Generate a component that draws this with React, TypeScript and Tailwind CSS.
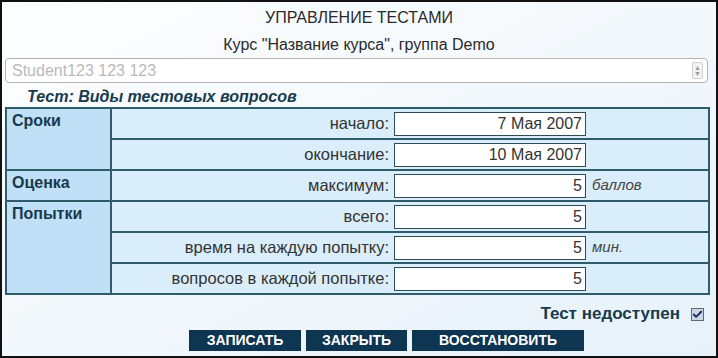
import { Check } from "lucide-react";

type Row = {
  label: string;
  value: string;
  unit?: string;
};

type Group = {
  title: string;
  rows: Row[];
};

const groups: Group[] = [
  {
    title: "Сроки",
    rows: [
      { label: "начало:", value: "7 Мая 2007" },
      { label: "окончание:", value: "10 Мая 2007" },
    ],
  },
  {
    title: "Оценка",
    rows: [{ label: "максимум:", value: "5", unit: "баллов" }],
  },
  {
    title: "Попытки",
    rows: [
      { label: "всего:", value: "5" },
      { label: "время на каждую попытку:", value: "5", unit: "мин." },
      { label: "вопросов в каждой попытке:", value: "5" },
    ],
  },
];

const buttons = [
  { text: "ЗАПИСАТЬ", w: "w-[112px]" },
  { text: "ЗАКРЫТЬ", w: "w-[101px]" },
  { text: "ВОССТАНОВИТЬ", w: "w-[172px]" },
];

export default function App() {
  return (
    <div className="h-[358px] w-[718px] overflow-hidden border-2 border-[#111] bg-gradient-to-br from-[#fdfeff] via-[#f3f8fc] to-[#e6f1fa] font-['Liberation_Sans',Arial,sans-serif] text-[#333]">
      <div className="flex flex-col px-[3px]">
        <div className="pt-[6px] text-center text-[16px] leading-[20px] text-[#2a2a2a]">УПРАВЛЕНИЕ ТЕСТАМИ</div>
        <div className="mt-[7px] text-center text-[16px] leading-[20px] text-[#2a2a2a]">
          Курс "Название курса", группа Demo
        </div>

        <div className="mt-[3px] flex h-[25px] w-[703px] items-center justify-between rounded-[4px] border border-[#b5b5b5] bg-white pl-[6px] pr-[4px]">
          <span className="text-[16px] text-[#b9b9b9]">Student123 123 123</span>
          <span className="flex h-[17px] w-[11px] flex-col items-center justify-center rounded-[2px] border border-[#d0d0d0] bg-[#f3f3f3] text-[7px] leading-[6px] text-[#999]">
            <span>▲</span>
            <span>▼</span>
          </span>
        </div>

        <div className="mt-[4px] pl-[22px] text-[16px] font-bold italic leading-[20px] text-[#173a4c]">
          Тест: Виды тестовых вопросов
        </div>

        <table className="w-[705px] border-collapse border-2 border-[#2f5c6a]">
          <tbody>
            {groups.map((g) =>
              g.rows.map((r, i) => (
                <tr key={g.title + r.label} className="h-[31px]">
                  {i === 0 ? (
                    <td
                      rowSpan={g.rows.length}
                      className="w-[105px] border-2 border-[#2f5c6a] bg-[#bfe0f7] px-[5px] pt-[3px] align-top text-[16px] font-bold leading-[18px] text-[#173a4c]"
                    >
                      {g.title}
                    </td>
                  ) : null}
                  <td className="border-2 border-[#2f5c6a] bg-[#d9edfa] p-0">
                    <div className="flex items-center">
                      <span className="w-[282px] pr-[5px] text-right text-[16.5px] text-[#333]">{r.label}</span>
                      <div className="flex h-[24px] w-[192px] items-center justify-end border border-[#2d4c57] bg-white pr-[3px] text-[16px] text-[#333]">
                        {r.value}
                      </div>
                      {r.unit ? (
                        <span className="pl-[6px] text-[15px] italic text-[#444]">{r.unit}</span>
                      ) : null}
                    </div>
                  </td>
                </tr>
              ))
            )}
          </tbody>
        </table>

        <div className="mt-[9px] flex items-center justify-end pr-[9px]">
          <span className="text-[17px] font-bold leading-[20px] text-[#173a4c]">Тест недоступен</span>
          <span className="ml-[11px] flex h-[13px] w-[13px] items-center justify-center border border-[#666] bg-[#cdd4e4]">
            <Check className="h-[11px] w-[11px] text-[#0f2a66]" strokeWidth={4} />
          </span>
        </div>

        <div className="mt-[6px] flex gap-[5px] pl-[184px]">
          {buttons.map((b) => (
            <button
              key={b.text}
              className={`h-[21px] bg-[#0e3552] text-[14px] font-bold leading-[21px] text-white ${b.w}`}
            >
              {b.text}
            </button>
          ))}
        </div>
      </div>
    </div>
  );
}
